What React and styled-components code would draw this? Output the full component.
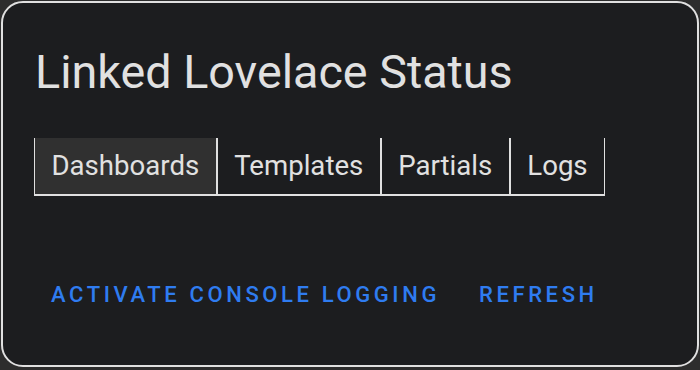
import styled, { createGlobalStyle } from 'styled-components';
import { useState } from 'react';

const GlobalStyle = createGlobalStyle`
  html, body {
    margin: 0;
    padding: 0;
    background: #2d2d2d;
  }
  body {
    font-family: Roboto, "Liberation Sans", sans-serif;
    -webkit-font-smoothing: antialiased;
  }
`;

const Card = styled.div`
  box-sizing: border-box;
  margin: 1px;
  width: 698px;
  height: 366px;
  background: #1c1d1f;
  border: 2px solid #e0e0e0;
  border-radius: 22px;
  color: #e1e1e1;
  padding: 42px 31px 0;
`;

const Title = styled.h1`
  margin: 0 0 38px 1px;
  font-size: 46.7px;
  line-height: 55px;
  font-weight: 400;
  color: #e1e1e1;
`;

const TabBar = styled.div`
  display: inline-flex;
  border-bottom: 2px solid #e0e0e0;
`;

const Tab = styled.button`
  font-family: inherit;
  font-size: 27.6px;
  line-height: 32px;
  font-weight: 400;
  color: #e1e1e1;
  background: ${(p) => (p.$active ? '#303030' : 'transparent')};
  border: none;
  border-left: 1px solid #e0e0e0;
  border-right: 1px solid #e0e0e0;
  padding: 12px 16.5px 12px;
  margin: 0;
  cursor: pointer;
`;

const Actions = styled.div`
  display: flex;
  gap: 5px;
  margin-top: 81px;
`;

const TextButton = styled.button`
  font-family: inherit;
  font-size: 22px;
  line-height: 36px;
  font-weight: 500;
  letter-spacing: 3.6px;
  text-transform: uppercase;
  color: #2f7cf0;
  background: transparent;
  border: none;
  padding: 0 17px;
  cursor: pointer;
`;

const tabs = ['Dashboards', 'Templates', 'Partials', 'Logs'];

export default function App() {
  const [active, setActive] = useState('Dashboards');

  return (
    <>
      <GlobalStyle />
      <Card>
        <Title>Linked Lovelace Status</Title>
        <TabBar>
          {tabs.map((t) => (
            <Tab key={t} $active={t === active} onClick={() => setActive(t)}>
              {t}
            </Tab>
          ))}
        </TabBar>
        <Actions>
          <TextButton>Activate console logging</TextButton>
          <TextButton>Refresh</TextButton>
        </Actions>
      </Card>
    </>
  );
}
